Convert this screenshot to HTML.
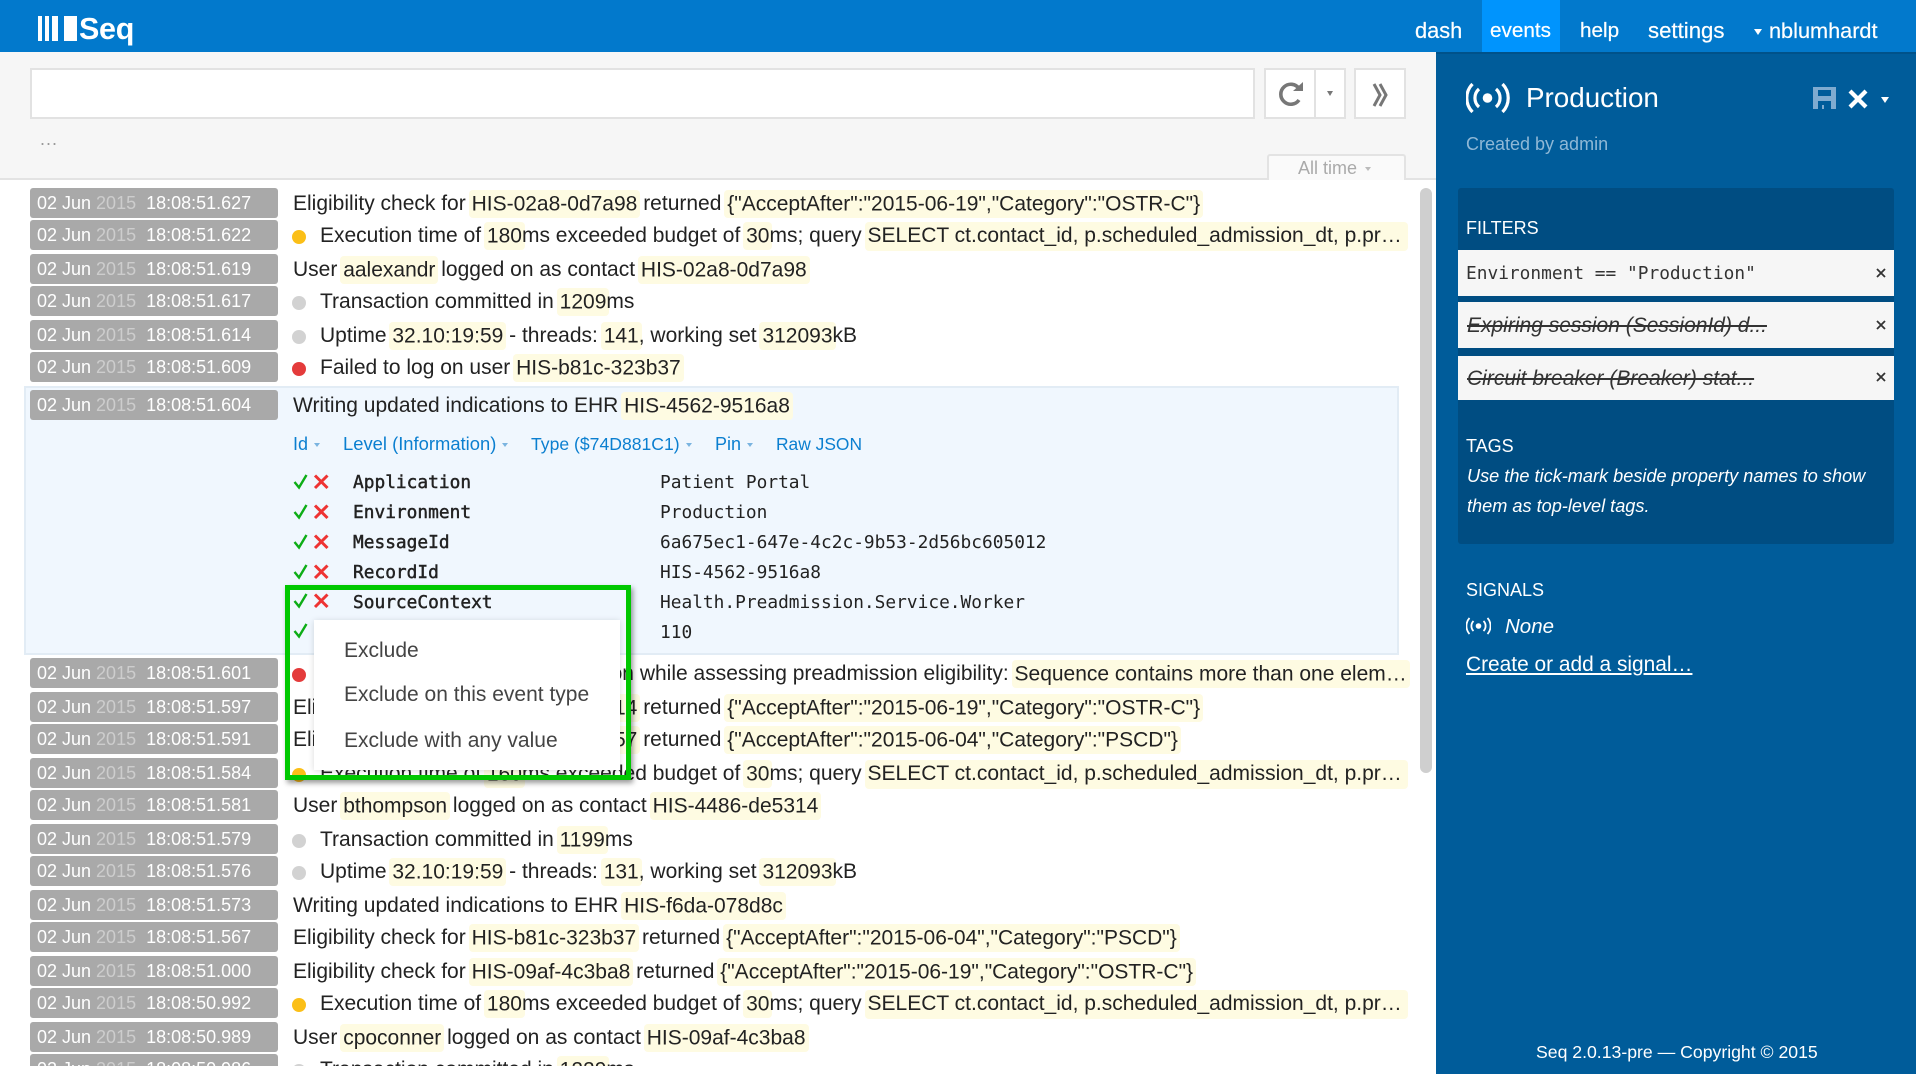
<!DOCTYPE html>
<html><head><meta charset="utf-8"><title>Seq</title>
<style>
html,body{margin:0;padding:0;width:1916px;height:1074px;overflow:hidden;background:#fff;font-family:"Liberation Sans",sans-serif;color:#222}
*{box-sizing:border-box}
.a{position:absolute;white-space:nowrap}
#hd{left:0;top:0;width:1916px;height:52px;background:#0279cc}
.nav{top:18px;font-size:21px;line-height:26px;color:#fff;-webkit-text-stroke:.2px #fff}
#tb{left:0;top:52px;width:1436px;height:128px;background:#f6f6f6;border-bottom:2px solid #e3e3e3}
.bx{background:#fff;border:2px solid #e2e2e2}
#list{left:0;top:180px;width:1436px;height:886px;overflow:hidden;background:#fff}
.r{position:absolute;left:0;width:1436px;height:30px}
.t{position:absolute;left:30px;top:0;width:248px;height:30px;background:#a9a9a9;border-radius:3px;color:#fff;font-size:18px;line-height:31px;padding-left:7px;white-space:pre}
.t i{font-style:normal;color:#cdcdcd}
.m{position:absolute;left:293px;top:0;font-size:21px;line-height:31px;white-space:nowrap;color:#222}
.m.i{left:320px}
.h{background:#fefbe2;border-radius:4px;padding:2.5px 3px;margin:0 -3px}
.d{position:absolute;left:292px;top:10px;width:14px;height:14px;border-radius:50%}
.y{background:#fbbf17}.e{background:#e43b3b}.g{background:#d2d2d2}
#ex{left:24px;top:206px;width:1375px;height:269px;background:#f0f7fe;border:2px solid #e2ecf5}
.lk{top:252px;font-size:18px;line-height:24px;color:#0b7fd0}
.car{display:inline-block;width:0;height:0;border-left:3px solid transparent;border-right:3px solid transparent;border-top:4px solid #7ab4e0;margin-left:6px;vertical-align:3px}
.pn,.pv{font-family:"DejaVu Sans Mono",monospace;font-size:17.83px;line-height:24px;color:#222}
.pn{left:353px;-webkit-text-stroke:.45px #222}
.pv{left:660px}
#sb{left:1436px;top:52px;width:480px;height:1022px;background:#005c9a;border-top:2px solid #00528a}
.s{color:#fff;font-size:18px;line-height:24px}
.f{left:1458px;width:436px;background:#f6f6f6}
.ft{position:absolute;left:9px;font-size:21px;line-height:24px;color:#333;white-space:nowrap}
.x{position:absolute;left:417px;width:12px;height:12px}
</style></head><body>

<div class="a" id="hd">
  <div class="a" style="left:38px;top:16px;width:4px;height:25px;background:#fff"></div>
  <div class="a" style="left:45px;top:16px;width:4px;height:25px;background:#fff"></div>
  <div class="a" style="left:52px;top:16px;width:6px;height:25px;background:#fff"></div>
  <div class="a" style="left:64px;top:16px;width:13px;height:25px;background:#fff"></div>
  <div class="a" style="left:79px;top:9px;font-size:30.5px;line-height:40px;font-weight:bold;color:#fff;letter-spacing:-.3px">Seq</div>
  <div class="a" style="left:1482px;top:0;width:78px;height:52px;background:#0094fd"></div>
  <div class="a nav" style="left:1415px;font-size:21.8px">dash</div>
  <div class="a nav" style="left:1490px;font-size:20.7px">events</div>
  <div class="a nav" style="left:1580px;font-size:20.7px">help</div>
  <div class="a nav" style="left:1648px;font-size:22.2px">settings</div>
  <div class="a" style="left:1754px;top:29px;width:0;height:0;border-left:4px solid transparent;border-right:4px solid transparent;border-top:6px solid #fff"></div>
  <div class="a nav" style="left:1769px;font-size:21.7px">nblumhardt</div>
</div>

<div class="a" id="tb">
  <div class="a bx" style="left:30px;top:16px;width:1225px;height:51px"></div>
  <div class="a bx" style="left:1264px;top:16px;width:82px;height:51px"></div>
  <div class="a" style="left:1314px;top:16px;width:2px;height:51px;background:#e2e2e2"></div>
  <svg class="a" style="left:1278px;top:28px" width="28" height="28" viewBox="0 0 28 28"><path d="M21 8.5A10 10 0 1 0 21 20" fill="none" stroke="#777" stroke-width="3.6"/><path d="M15 11 L25 11 L25 2 Z" fill="#777"/></svg>
  <div class="a" style="left:1327px;top:39px;width:0;height:0;border-left:3.5px solid transparent;border-right:3.5px solid transparent;border-top:5px solid #777"></div>
  <div class="a bx" style="left:1354px;top:16px;width:52px;height:51px"></div>
  <svg class="a" style="left:1371px;top:30px" width="20" height="26" viewBox="0 0 20 26"><path d="M3 2 L9 13 L3 24 M9 2 L15 13 L9 24" fill="none" stroke="#777" stroke-width="3"/></svg>
  <div class="a" style="left:40px;top:77px;font-size:18px;line-height:20px;color:#999;letter-spacing:1px">...</div>
  <div class="a" style="left:1267px;top:102px;width:139px;height:26px;background:#fafafa;border:2px solid #e3e3e3;border-bottom:none;border-radius:3px 3px 0 0"></div>
  <div class="a" style="left:1298px;top:104px;font-size:18px;line-height:24px;color:#aaa">All time</div>
  <div class="a" style="left:1365px;top:115px;width:0;height:0;border-left:3px solid transparent;border-right:3px solid transparent;border-top:4px solid #bbb"></div>
</div>

<div class="a" id="list">
<div class="a" id="ex"></div>

<div class="r" style="top:8px"><div class="t">02 Jun <i>2015</i>  18:08:51.627</div><div class="m">Eligibility check for <span class="h">HIS-02a8-0d7a98</span> returned <span class="h">{"AcceptAfter":"2015-06-19","Category":"OSTR-C"}</span></div></div>
<div class="r" style="top:40px"><div class="t">02 Jun <i>2015</i>  18:08:51.622</div><span class="d y"></span><div class="m i">Execution time of <span class="h">180</span>ms exceeded budget of <span class="h">30</span>ms; query <span class="h" style="display:inline-block;width:543px;line-height:24px;padding:2.5px 3px">SELECT ct.contact_id, p.scheduled_admission_dt, p.pr…</span></div></div>
<div class="r" style="top:74px"><div class="t">02 Jun <i>2015</i>  18:08:51.619</div><div class="m">User <span class="h">aalexandr</span> logged on as contact <span class="h">HIS-02a8-0d7a98</span></div></div>
<div class="r" style="top:106px"><div class="t">02 Jun <i>2015</i>  18:08:51.617</div><span class="d g"></span><div class="m i">Transaction committed in <span class="h">1209</span>ms</div></div>
<div class="r" style="top:140px"><div class="t">02 Jun <i>2015</i>  18:08:51.614</div><span class="d g"></span><div class="m i">Uptime <span class="h">32.10:19:59</span> - threads: <span class="h">141</span>, working set <span class="h">312093</span>kB</div></div>
<div class="r" style="top:172px"><div class="t">02 Jun <i>2015</i>  18:08:51.609</div><span class="d e"></span><div class="m i">Failed to log on user <span class="h">HIS-b81c-323b37</span></div></div>
<div class="r" style="top:210px"><div class="t">02 Jun <i>2015</i>  18:08:51.604</div><div class="m">Writing updated indications to EHR <span class="h">HIS-4562-9516a8</span></div></div>

<div class="a lk" style="left:293px">Id<span class="car"></span></div>
<div class="a lk" style="left:343px;font-size:18.4px">Level (Information)<span class="car"></span></div>
<div class="a lk" style="left:531px;font-size:17.6px">Type ($74D881C1)<span class="car"></span></div>
<div class="a lk" style="left:715px">Pin<span class="car"></span></div>
<div class="a lk" style="left:776px;font-size:17.4px">Raw JSON</div>

<svg class="a" style="left:293px;top:290px;overflow:visible" width="40" height="175" viewBox="0 0 40 175">
<g fill="none" stroke="#0dad16" stroke-width="2.4"><path d="M1.500 12 L6 17.500 L13.500 5"/><path d="M1.500 42 L6 47.500 L13.500 35"/><path d="M1.500 72 L6 77.500 L13.500 65"/><path d="M1.500 102 L6 107.500 L13.500 95"/><path d="M1.500 131 L6 136.500 L13.500 124"/><path d="M1.500 161 L6 166.500 L13.500 154"/></g>
<g fill="none" stroke="#ee3333" stroke-width="3"><path d="M22 5.500 L34.500 18 M34.500 5.500 L22 18"/><path d="M22 35.500 L34.500 48 M34.500 35.500 L22 48"/><path d="M22 65.500 L34.500 78 M34.500 65.500 L22 78"/><path d="M22 95.500 L34.500 108 M34.500 95.500 L22 108"/><path d="M22 124.500 L34.500 137 M34.500 124.500 L22 137"/></g></svg>

<div class="a pn" style="top:291px">Application</div><div class="a pv" style="top:291px">Patient Portal</div>
<div class="a pn" style="top:321px">Environment</div><div class="a pv" style="top:321px">Production</div>
<div class="a pn" style="top:351px">MessageId</div><div class="a pv" style="top:351px">6a675ec1-647e-4c2c-9b53-2d56bc605012</div>
<div class="a pn" style="top:381px">RecordId</div><div class="a pv" style="top:381px">HIS-4562-9516a8</div>
<div class="a pn" style="top:411px">SourceContext</div><div class="a pv" style="top:411px">Health.Preadmission.Service.Worker</div>
<div class="a pv" style="top:441px">110</div>

<div class="r" style="top:478px"><div class="t">02 Jun <i>2015</i>  18:08:51.601</div><span class="d e"></span><div class="m i"><span style="display:inline-block;width:314px;text-align:right">Unhandled exception</span> while assessing preadmission eligibility: <span class="h">Sequence contains more than one elem…</span></div></div>
<div class="r" style="top:512px"><div class="t">02 Jun <i>2015</i>  18:08:51.597</div><div class="m">Eligibility check for <span class="h">HIS-4486-de5314</span> returned <span class="h">{"AcceptAfter":"2015-06-19","Category":"OSTR-C"}</span></div></div>
<div class="r" style="top:544px"><div class="t">02 Jun <i>2015</i>  18:08:51.591</div><div class="m">Eligibility check for <span class="h">HIS-70a3-60e557</span> returned <span class="h">{"AcceptAfter":"2015-06-04","Category":"PSCD"}</span></div></div>
<div class="r" style="top:578px"><div class="t">02 Jun <i>2015</i>  18:08:51.584</div><span class="d y"></span><div class="m i">Execution time of <span class="h">160</span>ms exceeded budget of <span class="h">30</span>ms; query <span class="h" style="display:inline-block;width:543px;line-height:24px;padding:2.5px 3px">SELECT ct.contact_id, p.scheduled_admission_dt, p.pr…</span></div></div>
<div class="r" style="top:610px"><div class="t">02 Jun <i>2015</i>  18:08:51.581</div><div class="m">User <span class="h">bthompson</span> logged on as contact <span class="h">HIS-4486-de5314</span></div></div>
<div class="r" style="top:644px"><div class="t">02 Jun <i>2015</i>  18:08:51.579</div><span class="d g"></span><div class="m i">Transaction committed in <span class="h">1199</span>ms</div></div>
<div class="r" style="top:676px"><div class="t">02 Jun <i>2015</i>  18:08:51.576</div><span class="d g"></span><div class="m i">Uptime <span class="h">32.10:19:59</span> - threads: <span class="h">131</span>, working set <span class="h">312093</span>kB</div></div>
<div class="r" style="top:710px"><div class="t">02 Jun <i>2015</i>  18:08:51.573</div><div class="m">Writing updated indications to EHR <span class="h">HIS-f6da-078d8c</span></div></div>
<div class="r" style="top:742px"><div class="t">02 Jun <i>2015</i>  18:08:51.567</div><div class="m">Eligibility check for <span class="h">HIS-b81c-323b37</span> returned <span class="h">{"AcceptAfter":"2015-06-04","Category":"PSCD"}</span></div></div>
<div class="r" style="top:776px"><div class="t">02 Jun <i>2015</i>  18:08:51.000</div><div class="m">Eligibility check for <span class="h">HIS-09af-4c3ba8</span> returned <span class="h">{"AcceptAfter":"2015-06-19","Category":"OSTR-C"}</span></div></div>
<div class="r" style="top:808px"><div class="t">02 Jun <i>2015</i>  18:08:50.992</div><span class="d y"></span><div class="m i">Execution time of <span class="h">180</span>ms exceeded budget of <span class="h">30</span>ms; query <span class="h" style="display:inline-block;width:543px;line-height:24px;padding:2.5px 3px">SELECT ct.contact_id, p.scheduled_admission_dt, p.pr…</span></div></div>
<div class="r" style="top:842px"><div class="t">02 Jun <i>2015</i>  18:08:50.989</div><div class="m">User <span class="h">cpoconner</span> logged on as contact <span class="h">HIS-09af-4c3ba8</span></div></div>
<div class="r" style="top:874px"><div class="t">02 Jun <i>2015</i>  18:08:50.986</div><span class="d g"></span><div class="m i">Transaction committed in <span class="h">1229</span>ms</div></div>

<div class="a" style="left:1420px;top:8px;width:12px;height:585px;background:#cfcfcf;border-radius:6px"></div>

<div class="a" style="left:285px;top:405px;width:346px;height:195px;border:5px solid #00c800;box-shadow:2px 3px 5px rgba(0,0,0,.4)"></div>
<div class="a" style="left:314px;top:440px;width:306px;height:150px;background:#fff;box-shadow:0 1px 6px rgba(0,0,0,.15);font-size:21px;line-height:30px;color:#444">
  <div class="a" style="left:30px;top:16px">Exclude</div>
  <div class="a" style="left:30px;top:60px">Exclude on this event type</div>
  <div class="a" style="left:30px;top:106px">Exclude with any value</div>
</div>
</div>

<div class="a" id="sb"></div>
<svg class="a" style="left:1466px;top:82px" width="44" height="32" viewBox="0 0 44 32"><circle cx="21.500" cy="16" r="4.800" fill="#fff"/><path d="M13 7 A12 12 0 0 0 13 25 M30 7 A12 12 0 0 1 30 25 M6.500 2 A20 20 0 0 0 6.500 30 M36.500 2 A20 20 0 0 1 36.500 30" fill="none" stroke="#fff" stroke-width="3.200"/></svg>
<div class="a" style="left:1526px;top:81px;font-size:27.8px;line-height:34px;color:#fff">Production</div>
<div class="a" style="left:1466px;top:132px;font-size:18px;line-height:24px;color:#8fb8d6">Created by admin</div>
<svg class="a" style="left:1813px;top:87px" width="23" height="22" viewBox="0 0 23 22"><path d="M0 0H23V22H0Z M5 3V9H18V3Z M5 14V22H9V18H11V22H18V14Z" fill="#7fabd0" fill-rule="evenodd"/></svg>
<svg class="a" style="left:1848px;top:89px" width="20" height="20" viewBox="0 0 20 20"><path d="M2 2 L18 18 M18 2 L2 18" stroke="#fff" stroke-width="4.200"/></svg>
<div class="a" style="left:1881px;top:97px;width:0;height:0;border-left:4px solid transparent;border-right:4px solid transparent;border-top:6px solid #fff"></div>

<div class="a" style="left:1458px;top:188px;width:436px;height:356px;background:#004d82;border-radius:3px"></div>
<div class="a s" style="left:1466px;top:216px">FILTERS</div>
<div class="a f" style="top:250px;height:46px"><div class="ft" style="top:12px;left:8px;font-family:'DejaVu Sans Mono',monospace;font-size:17.83px">Environment == "Production"</div><svg class="x" style="top:17px" viewBox="0 0 12 12"><path d="M2 2L10 10M10 2L2 10" stroke="#333" stroke-width="1.800"/></svg></div>
<div class="a f" style="top:302px;height:46px"><div class="ft" style="top:12px;font-style:italic;text-decoration:line-through">Expiring session (SessionId) d...</div><svg class="x" style="top:17px" viewBox="0 0 12 12"><path d="M2 2L10 10M10 2L2 10" stroke="#333" stroke-width="1.800"/></svg></div>
<div class="a f" style="top:356px;height:44px"><div class="ft" style="top:11px;font-style:italic;text-decoration:line-through">Circuit breaker (Breaker) stat...</div><svg class="x" style="top:15px" viewBox="0 0 12 12"><path d="M2 2L10 10M10 2L2 10" stroke="#333" stroke-width="1.800"/></svg></div>
<div class="a s" style="left:1466px;top:434px">TAGS</div>
<div class="a s" style="left:1467px;top:464px;font-style:italic;font-size:18.15px">Use the tick-mark beside property names to show</div>
<div class="a s" style="left:1467px;top:494px;font-style:italic;font-size:18.15px">them as top-level tags.</div>
<div class="a s" style="left:1466px;top:578px">SIGNALS</div>
<svg class="a" style="left:1466px;top:617px" width="25" height="18" viewBox="0 0 25 18"><circle cx="12.500" cy="9" r="2.800" fill="#fff"/><path d="M7.500 4 A7 7 0 0 0 7.500 14 M17.500 4 A7 7 0 0 1 17.500 14 M3.500 1 A12 12 0 0 0 3.500 17 M21.500 1 A12 12 0 0 1 21.500 17" fill="none" stroke="#fff" stroke-width="1.800"/></svg>
<div class="a s" style="left:1505px;top:615px;font-size:20.5px;font-style:italic">None</div>
<div class="a s" style="left:1466px;top:653px;font-size:20.9px;text-decoration:underline">Create or add a signal…</div>
<div class="a s" style="left:1536px;top:1040px;font-size:17.65px">Seq 2.0.13-pre — Copyright © 2015</div>

</body></html>
